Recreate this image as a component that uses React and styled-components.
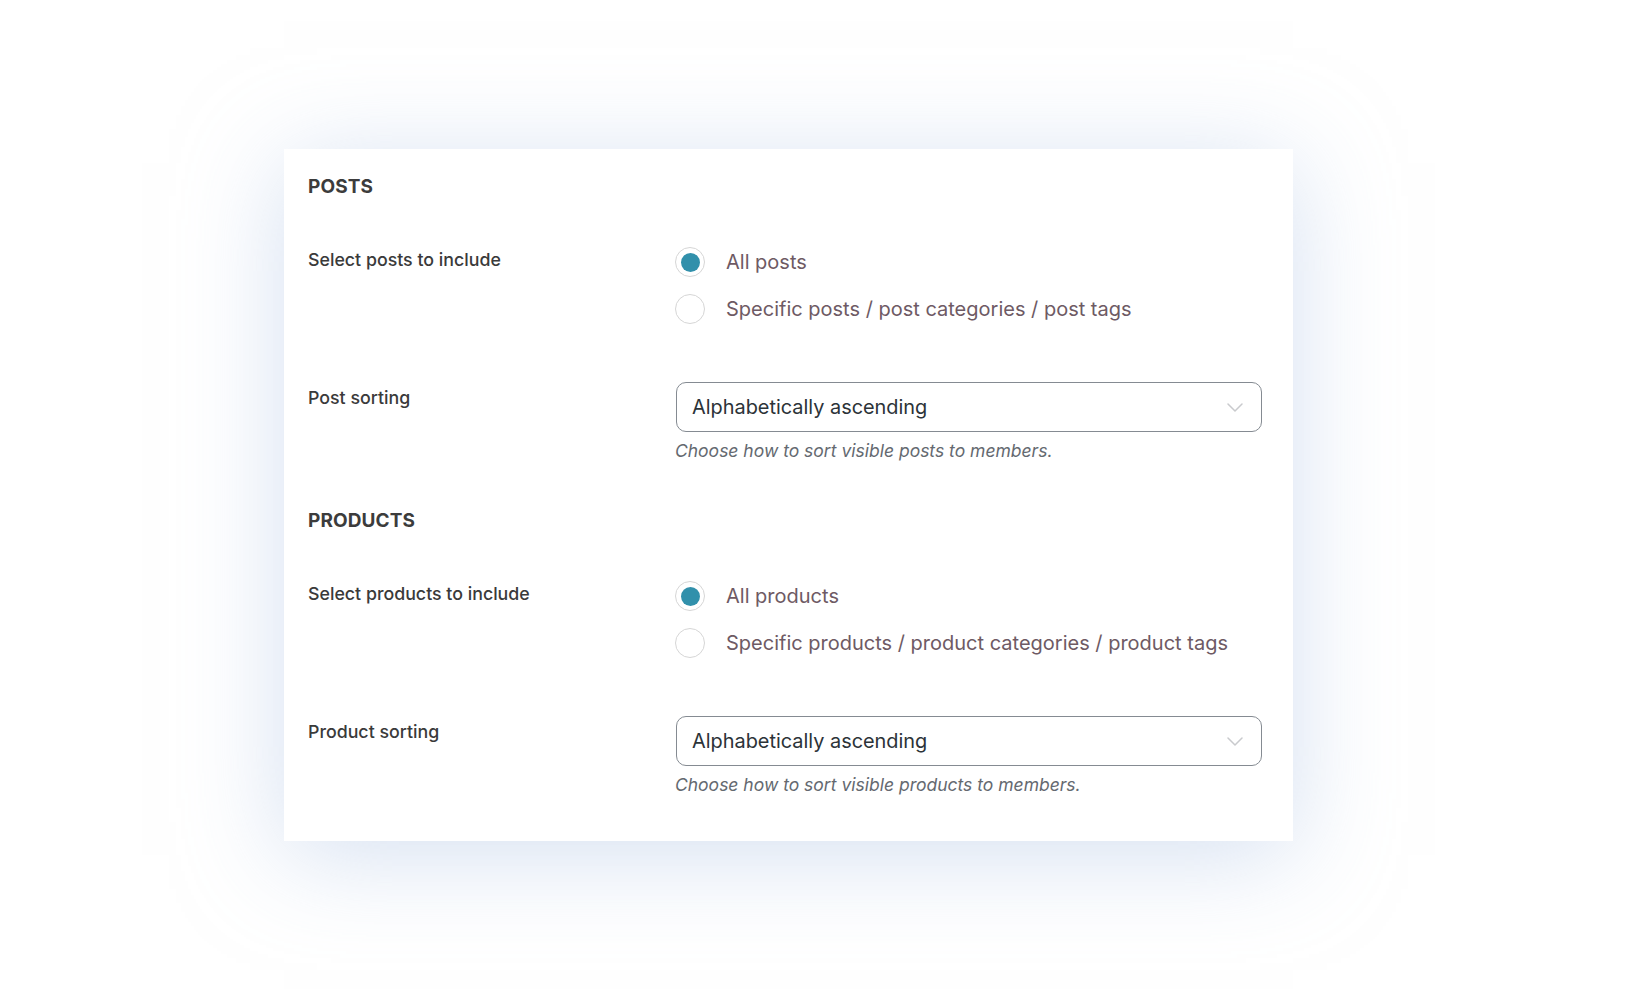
import React from "react";
import styled, { createGlobalStyle } from "styled-components";

const Global = createGlobalStyle`
  html, body { margin: 0; padding: 0; background: #ffffff; }
  body { font-family: Inter, "Noto Sans", sans-serif; -webkit-font-smoothing: antialiased; }
`;

const Page = styled.div`
  width: 1636px;
  min-height: 989px;
  padding: 149px 0 0 284px;
  box-sizing: border-box;
`;

const Card = styled.div`
  width: 1009px;
  box-sizing: border-box;
  background: #fff;
  padding: 26px 31px 46px 24px;
  box-shadow: 0 14px 95px 0 rgba(178, 198, 230, 0.55);
  display: flex;
  flex-direction: column;
  gap: 48px;
`;

const Section = styled.section`
  display: flex;
  flex-direction: column;
`;

const Heading = styled.h2`
  margin: 0 0 48px;
  font-size: 19px;
  line-height: 24px;
  font-weight: 700;
  color: #3c3c3c;
  letter-spacing: 0.1px;
`;

const Row = styled.div`
  display: grid;
  grid-template-columns: 367px 587px;
  align-items: start;
  margin-bottom: ${(p) => p.$gap || 0}px;
`;

const Label = styled.div`
  padding-top: ${(p) => p.$offset || 0}px;
  font-size: 17.8px;
  line-height: 24px;
  font-weight: 500;
  color: #3a3a3a;
`;

const RadioList = styled.div`
  display: flex;
  flex-direction: column;
  gap: 17px;
`;

const RadioItem = styled.label`
  display: flex;
  align-items: center;
  gap: 21px;
  height: 30px;
  font-size: 20px;
  color: #6e5a64;
`;

const RadioCircle = styled.span`
  width: 30px;
  height: 30px;
  box-sizing: border-box;
  border-radius: 50%;
  border: 1.5px solid #d6d6d6;
  background: #fff;
  display: flex;
  align-items: center;
  justify-content: center;
  flex: none;
  &::after {
    content: "";
    width: 19px;
    height: 19px;
    border-radius: 50%;
    background: #3190ab;
    display: ${(p) => (p.$checked ? "block" : "none")};
  }
`;

const Field = styled.div`
  display: flex;
  flex-direction: column;
`;

const Select = styled.div`
  margin-left: 1px;
  height: 50px;
  box-sizing: border-box;
  border: 1.5px solid #858b92;
  border-radius: 10px;
  display: flex;
  align-items: center;
  justify-content: space-between;
  padding: 0 18px 0 15px;
  font-size: 19.9px;
  color: #2c3338;
`;

const Hint = styled.div`
  margin-top: 9px;
  font-size: 17.5px;
  line-height: 20px;
  font-style: italic;
  color: #646970;
`;

const Chevron = () => (
  <svg width="16" height="9" viewBox="0 0 16 9" fill="none">
    <path d="M1 1l7 7 7-7" stroke="#c9cacd" strokeWidth="1.5" strokeLinecap="round" strokeLinejoin="round" />
  </svg>
);

const Radio = ({ checked, children }) => (
  <RadioItem>
    <RadioCircle $checked={checked} />
    <span>{children}</span>
  </RadioItem>
);

const Block = ({ title, includeLabel, allLabel, specificLabel, sortLabel, hint }) => (
  <Section>
    <Heading>{title}</Heading>
    <Row $gap={58}>
      <Label $offset={1}>{includeLabel}</Label>
      <RadioList>
        <Radio checked>{allLabel}</Radio>
        <Radio>{specificLabel}</Radio>
      </RadioList>
    </Row>
    <Row>
      <Label $offset={4}>{sortLabel}</Label>
      <Field>
        <Select>
          <span>Alphabetically ascending</span>
          <Chevron />
        </Select>
        <Hint>{hint}</Hint>
      </Field>
    </Row>
  </Section>
);

export default function App() {
  return (
    <>
      <Global />
      <Page>
        <Card>
          <Block
            title="POSTS"
            includeLabel="Select posts to include"
            allLabel="All posts"
            specificLabel="Specific posts / post categories / post tags"
            sortLabel="Post sorting"
            hint="Choose how to sort visible posts to members."
          />
          <Block
            title="PRODUCTS"
            includeLabel="Select products to include"
            allLabel="All products"
            specificLabel="Specific products / product categories / product tags"
            sortLabel="Product sorting"
            hint="Choose how to sort visible products to members."
          />
        </Card>
      </Page>
    </>
  );
}
